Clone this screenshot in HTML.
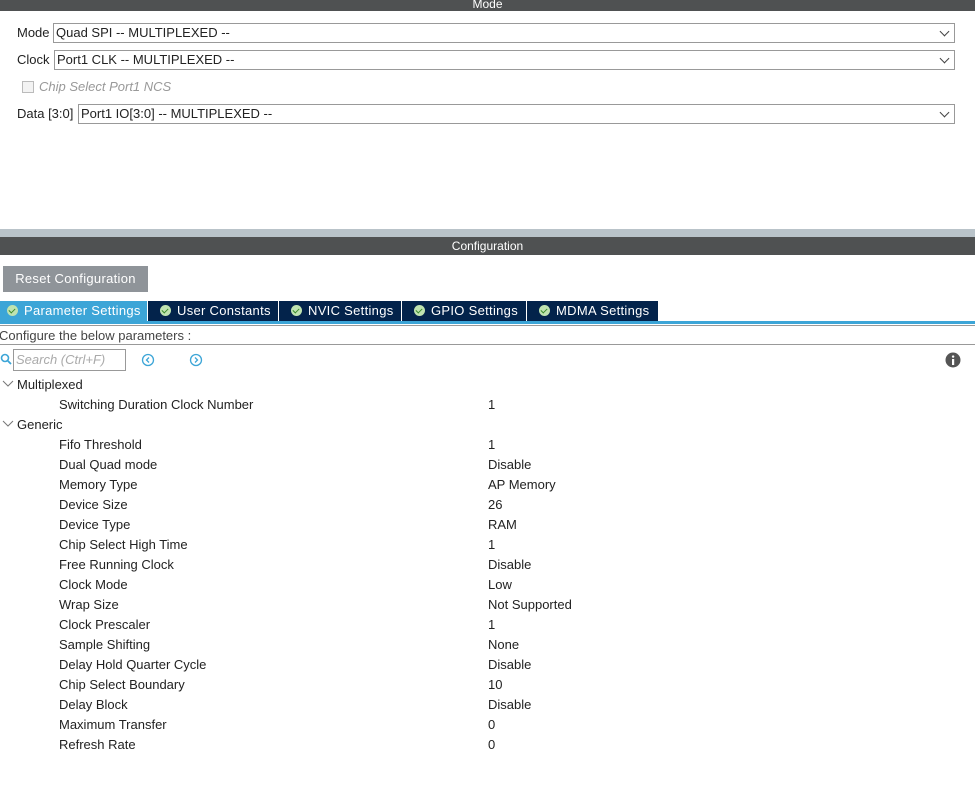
<html><head><style>
body{margin:0;width:975px;height:794px;background:#fff;font-family:"Liberation Sans",Arial,sans-serif;font-size:13px;color:#222;position:relative;overflow:hidden}
.a{position:absolute;white-space:nowrap}
.bar{position:absolute;left:0;width:975px;background:#4f5152;color:#fff;text-align:center}
.sel{position:absolute;height:20px;border:1px solid #999;box-sizing:border-box;line-height:18px;padding-left:2px;right:20px;color:#222}
.sel:after{content:"";position:absolute;right:6px;top:4px;width:6px;height:6px;border-right:1px solid #444;border-bottom:1px solid #444;transform:rotate(45deg)}
.tab{position:absolute;top:301px;height:20px;background:#03234b;color:#fff;line-height:20px;font-size:13px;letter-spacing:.3px}
.tab i{display:inline-block;width:11px;height:11px;border-radius:50%;background:#bfe3b0;vertical-align:-1px;margin:0 6px 0 12px;position:relative}
.tab.f i{margin-left:7px}
.tab i:after{content:"";position:absolute;left:3px;top:2px;width:3px;height:5px;border-right:1.5px solid #3a8a2a;border-bottom:1.5px solid #3a8a2a;transform:rotate(45deg)}
.r{position:absolute;left:59px}.v{position:absolute;left:488px}
</style></head><body>
<div class="bar" style="top:0;height:11px;line-height:9px;font-size:12px;overflow:hidden">Mode</div>
<div class="a" style="left:17px;top:25px">Mode</div><div class="sel" style="left:53px;top:23px">Quad SPI -- MULTIPLEXED --</div>
<div class="a" style="left:17px;top:52px">Clock</div><div class="sel" style="left:54px;top:50px">Port1 CLK -- MULTIPLEXED --</div>
<div class="a" style="left:22px;top:81px;width:10px;height:10px;border:1px solid #bbb;background:#f3f3f3"></div>
<div class="a" style="left:39px;top:79px;color:#999;font-style:italic">Chip Select Port1 NCS</div>
<div class="a" style="left:17px;top:106px">Data [3:0]</div><div class="sel" style="left:78px;top:104px">Port1 IO[3:0] -- MULTIPLEXED --</div>
<div class="a" style="left:0;top:229px;width:975px;height:8px;background:#b9c3c9"></div>
<div class="bar" style="top:237px;height:18px;line-height:18px;font-size:12px">Configuration</div>
<div class="a" style="left:3px;top:266px;width:145px;height:26px;background:#8f9499;color:#fff;text-align:center;line-height:26px;letter-spacing:.3px">Reset Configuration</div>
<div class="tab f" style="left:0;width:147px;background:#3ca5d7"><i></i>Parameter Settings</div>
<div class="tab" style="left:148px;width:130px"><i></i>User Constants</div>
<div class="tab" style="left:279px;width:122px"><i></i>NVIC Settings</div>
<div class="tab" style="left:402px;width:124px"><i></i>GPIO Settings</div>
<div class="tab" style="left:527px;width:131px"><i></i>MDMA Settings</div>
<div class="a" style="left:0;top:321px;width:975px;height:3px;background:#3ca5d7"></div>
<div class="a" style="left:0;top:325px;width:975px;height:1px;background:#999"></div>
<div class="a" style="left:-1px;top:328px;color:#444">Configure the below parameters :</div>
<div class="a" style="left:0;top:344px;width:975px;height:1px;background:#999"></div>
<svg class="a" style="left:0;top:353px" width="12" height="13"><circle cx="5" cy="5" r="3.5" fill="none" stroke="#3ca5d7" stroke-width="1.6"/><line x1="7.5" y1="7.5" x2="11" y2="11" stroke="#3ca5d7" stroke-width="1.8"/></svg>
<div class="a" style="left:13px;top:349px;width:109px;height:20px;border:1px solid #999;color:#aaa;font-style:italic;line-height:20px;padding-left:2px">Search (Ctrl+F)</div>
<svg class="a" style="left:141px;top:353px" width="14" height="14"><circle cx="7" cy="7" r="5.5" fill="none" stroke="#3ca5d7" stroke-width="1.3"/><path d="M8 4.5L5.5 7L8 9.5" fill="none" stroke="#3ca5d7" stroke-width="1.3"/></svg>
<svg class="a" style="left:189px;top:353px" width="14" height="14"><circle cx="7" cy="7" r="5.5" fill="none" stroke="#3ca5d7" stroke-width="1.3"/><path d="M6 4.5L8.5 7L6 9.5" fill="none" stroke="#3ca5d7" stroke-width="1.3"/></svg>
<svg class="a" style="left:945px;top:352px" width="16" height="16"><circle cx="8" cy="8" r="7.5" fill="#555"/><rect x="7" y="7" width="2.2" height="6" fill="#fff"/><circle cx="8.1" cy="4.6" r="1.2" fill="#fff"/></svg>
<svg class="a" style="left:2px;top:380px" width="12" height="8"><path d="M1 1L6 6L11 1" fill="none" stroke="#777"/></svg>
<div class="a" style="left:17px;top:377px">Multiplexed</div>
<div class="r" style="top:397px">Switching Duration Clock Number</div><div class="v" style="top:397px">1</div>
<svg class="a" style="left:2px;top:420px" width="12" height="8"><path d="M1 1L6 6L11 1" fill="none" stroke="#777"/></svg>
<div class="a" style="left:17px;top:417px">Generic</div>
<div class="r" style="top:437px">Fifo Threshold</div><div class="v" style="top:437px">1</div>
<div class="r" style="top:457px">Dual Quad mode</div><div class="v" style="top:457px">Disable</div>
<div class="r" style="top:477px">Memory Type</div><div class="v" style="top:477px">AP Memory</div>
<div class="r" style="top:497px">Device Size</div><div class="v" style="top:497px">26</div>
<div class="r" style="top:517px">Device Type</div><div class="v" style="top:517px">RAM</div>
<div class="r" style="top:537px">Chip Select High Time</div><div class="v" style="top:537px">1</div>
<div class="r" style="top:557px">Free Running Clock</div><div class="v" style="top:557px">Disable</div>
<div class="r" style="top:577px">Clock Mode</div><div class="v" style="top:577px">Low</div>
<div class="r" style="top:597px">Wrap Size</div><div class="v" style="top:597px">Not Supported</div>
<div class="r" style="top:617px">Clock Prescaler</div><div class="v" style="top:617px">1</div>
<div class="r" style="top:637px">Sample Shifting</div><div class="v" style="top:637px">None</div>
<div class="r" style="top:657px">Delay Hold Quarter Cycle</div><div class="v" style="top:657px">Disable</div>
<div class="r" style="top:677px">Chip Select Boundary</div><div class="v" style="top:677px">10</div>
<div class="r" style="top:697px">Delay Block</div><div class="v" style="top:697px">Disable</div>
<div class="r" style="top:717px">Maximum Transfer</div><div class="v" style="top:717px">0</div>
<div class="r" style="top:737px">Refresh Rate</div><div class="v" style="top:737px">0</div>
</body></html>
